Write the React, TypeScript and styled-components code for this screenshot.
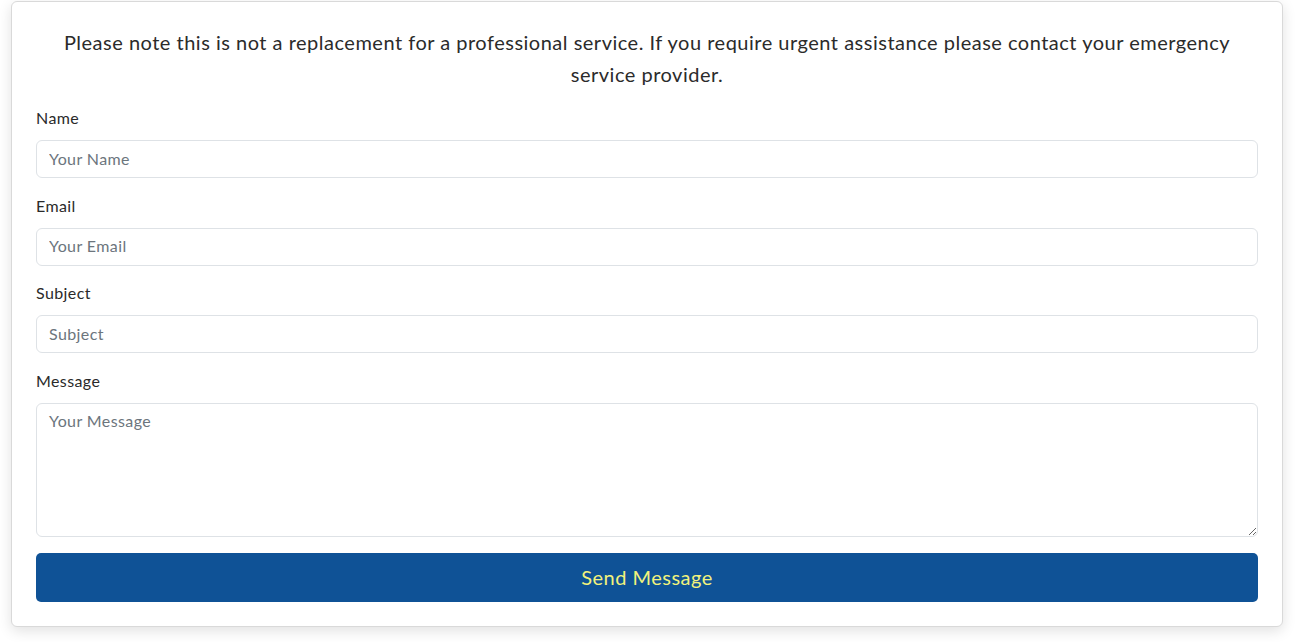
import React from 'react';
import styled, { createGlobalStyle } from 'styled-components';

const GlobalStyle = createGlobalStyle`
  body {
    margin: 0;
    background: #ffffff;
    font-family: "Lato", "Open Sans", sans-serif;
    letter-spacing: 0.4px;
    color: #212529;
  }
  * {
    box-sizing: border-box;
  }
`;

const Page = styled.div`
  padding: 1px 19px 16px 11px;
`;

const Card = styled.div`
  background: #ffffff;
  border: 1px solid #d9d9d9;
  border-radius: 6px;
  box-shadow: 0 4px 14px rgba(0, 0, 0, 0.12);
  padding: 24px;
`;

const Notice = styled.p`
  margin: 0 0 16px 0;
  text-align: center;
  font-size: 20px;
  line-height: 32px;
  letter-spacing: 0.5px;
  color: #2b2b2b;
`;

const Form = styled.form`
  display: flex;
  flex-direction: column;
`;

const Field = styled.div`
  display: flex;
  flex-direction: column;
  margin-bottom: 15.7px;
`;

const Label = styled.label`
  font-size: 16px;
  line-height: 24px;
  margin-bottom: 10px;
  color: #2a2a2a;
`;

const Input = styled.input`
  height: 38px;
  width: 100%;
  padding: 0 12px 2px;
  font-family: inherit;
  letter-spacing: inherit;
  font-size: 16px;
  color: #212529;
  border: 1px solid #dee2e6;
  border-radius: 6px;
  outline: none;

  &::placeholder {
    color: #6c757d;
  }
`;

const TextArea = styled.textarea<{ $rows: number }>`
  height: ${(p) => p.$rows * 24 + 14}px;
  width: 100%;
  padding: 5px 12px 7px;
  font-family: inherit;
  letter-spacing: inherit;
  font-size: 16px;
  line-height: 24px;
  color: #212529;
  border: 1px solid #dee2e6;
  border-radius: 6px;
  outline: none;
  resize: vertical;
  display: block;

  &::placeholder {
    color: #6c757d;
  }
`;

const SendButton = styled.button`
  height: 49px;
  width: 100%;
  border: none;
  border-radius: 5px;
  background: #0f5296;
  color: #f2f27c;
  font-family: inherit;
  letter-spacing: 0.5px;
  font-size: 20px;
  padding-bottom: 2px;
  cursor: pointer;
`;

const fields = [
  { label: 'Name', placeholder: 'Your Name', type: 'text' },
  { label: 'Email', placeholder: 'Your Email', type: 'email' },
  { label: 'Subject', placeholder: 'Subject', type: 'text' },
];

const App: React.FC = () => {
  return (
    <Page>
      <GlobalStyle />
      <Card>
        <Notice>
          Please note this is not a replacement for a professional service. If you require urgent
          assistance please contact your emergency service provider.
        </Notice>
        <Form onSubmit={(e) => e.preventDefault()}>
          {fields.map((f) => (
            <Field key={f.label}>
              <Label>{f.label}</Label>
              <Input type={f.type} placeholder={f.placeholder} />
            </Field>
          ))}
          <Field>
            <Label>Message</Label>
            <TextArea $rows={5} placeholder="Your Message" />
          </Field>
          <SendButton type="submit">Send Message</SendButton>
        </Form>
      </Card>
    </Page>
  );
};

export default App;
